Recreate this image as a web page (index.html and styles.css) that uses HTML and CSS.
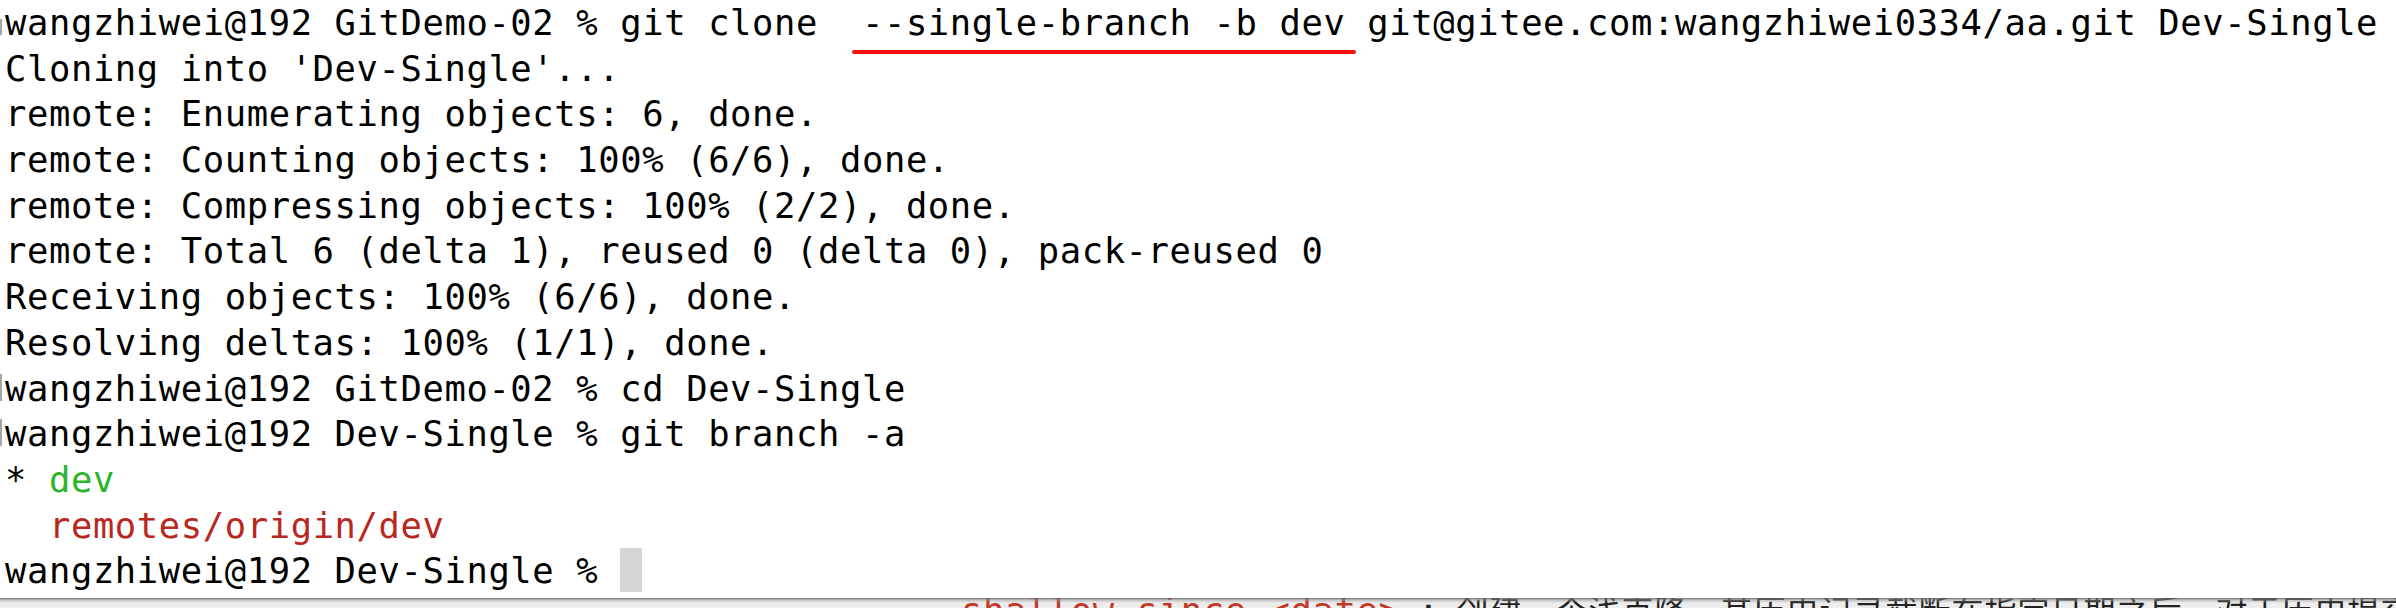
FILE: index.html
```html
<!DOCTYPE html>
<html>
<head>
<meta charset="utf-8">
<link rel="stylesheet" href="styles.css">
</head>
<body>
<div class="screen">
  <div class="term">
    <div class="line"><span class="gutter"><i class="mark mark-top"></i></span><span class="txt">wangzhiwei@192 GitDemo-02 % git clone  <span class="hl">--single-branch -b dev</span> git@gitee.com:wangzhiwei0334/aa.git Dev-Single</span></div>
    <div class="line"><span class="gutter"></span><span class="txt">Cloning into 'Dev-Single'...</span></div>
    <div class="line"><span class="gutter"></span><span class="txt">remote: Enumerating objects: 6, done.</span></div>
    <div class="line"><span class="gutter"></span><span class="txt">remote: Counting objects: 100% (6/6), done.</span></div>
    <div class="line"><span class="gutter"></span><span class="txt">remote: Compressing objects: 100% (2/2), done.</span></div>
    <div class="line"><span class="gutter"></span><span class="txt">remote: Total 6 (delta 1), reused 0 (delta 0), pack-reused 0</span></div>
    <div class="line"><span class="gutter"></span><span class="txt">Receiving objects: 100% (6/6), done.</span></div>
    <div class="line"><span class="gutter"></span><span class="txt">Resolving deltas: 100% (1/1), done.</span></div>
    <div class="line"><span class="gutter"><i class="mark"></i></span><span class="txt">wangzhiwei@192 GitDemo-02 % cd Dev-Single</span></div>
    <div class="line"><span class="gutter"><i class="mark"></i></span><span class="txt">wangzhiwei@192 Dev-Single % git branch -a</span></div>
    <div class="line"><span class="gutter"></span><span class="txt">* <span class="green">dev</span></span></div>
    <div class="line"><span class="gutter"></span><span class="txt">  <span class="red">remotes/origin/dev</span></span></div>
    <div class="line"><span class="gutter"></span><span class="txt">wangzhiwei@192 Dev-Single % <span class="cursor"></span></span></div>
  </div>
  <div class="under">
    <div class="under-text"><span class="bullet">-</span><span class="code">shallow-since &lt;date&gt;</span><span class="colon">:</span><span class="cn">创建一个浅克隆，其历史记录截断在指定日期之后，对于历史提交较多的</span></div>
  </div>
</div>
</body>
</html>
```

FILE: styles.css
```css
html, body {
  margin: 0;
  padding: 0;
  background: #ffffff;
}

.screen {
  width: 2396px;
  height: 608px;
  overflow: hidden;
  display: flex;
  flex-direction: column;
}

.term {
  height: 598px;
  flex: none;
  background: #ffffff;
  font-family: "DejaVu Sans Mono", "Liberation Mono", monospace;
  font-size: 35.5px;
  letter-spacing: 0.6px;
  line-height: 45.7px;
  color: #000000;
  overflow: hidden;
}

.line {
  display: flex;
  height: 45.7px;
}

.gutter {
  width: 5px;
  flex: none;
  display: flex;
  align-items: flex-start;
}

.mark {
  display: block;
  margin-top: 8px;
  width: 2px;
  height: 27px;
  border-left: 2px solid #a6a6a6;
  border-top: 1px solid #a6a6a6;
  border-bottom: 1px solid #a6a6a6;
  box-sizing: border-box;
}

.mark-top {
  margin-top: 19px;
  height: 16px;
  border-top: none;
}

.txt {
  white-space: pre;
}

.hl {
  position: relative;
}

.hl::after {
  content: "";
  position: absolute;
  left: -10px;
  right: -11px;
  top: 48px;
  height: 4px;
  border-radius: 2px;
  background: #f50f0f;
}

.green {
  color: #2bb52a;
}

.red {
  color: #b8281f;
}

.cursor {
  display: inline-block;
  width: 22px;
  height: 44px;
  vertical-align: top;
  background: #d6d6d6;
}

.under {
  height: 10px;
  flex: none;
  overflow: hidden;
  position: relative;
  background: #ededed;
}

.under::before {
  content: "";
  position: absolute;
  left: 0;
  right: 0;
  top: 0;
  height: 5px;
  background: linear-gradient(to bottom, rgba(90,90,90,0.85) 0px, rgba(150,150,150,0.5) 2px, rgba(220,220,220,0) 5px);
}

.under-text {
  display: flex;
  align-items: baseline;
  margin-top: -9px;
  padding-left: 832px;
  white-space: pre;
  font-family: "DejaVu Sans Mono", "Liberation Mono", monospace;
  font-size: 35.5px;
  line-height: 40px;
  color: #222222;
}

.bullet {
  width: 129px;
  flex: none;
  opacity: 0.6;
}

.code {
  color: #c0392b;
  letter-spacing: 0.6px;
}

.colon {
  width: 56px;
  flex: none;
  text-align: center;
}

.cn {
  font-family: "Noto Sans CJK SC", sans-serif;
  font-size: 32px;
  letter-spacing: 1px;
}
```
